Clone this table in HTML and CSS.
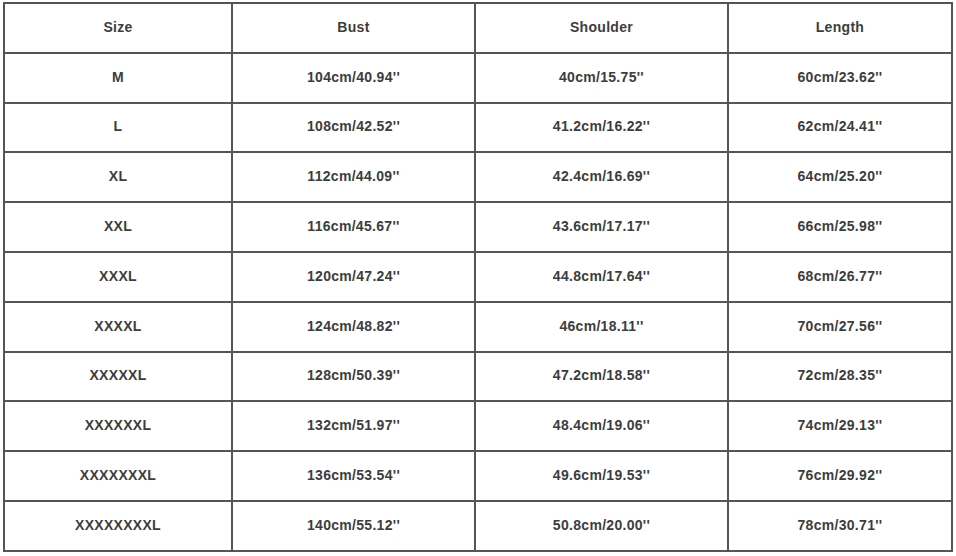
FILE: index.html
```html
<!DOCTYPE html>
<html>
<head>
<meta charset="utf-8">
<link rel="stylesheet" href="styles.css">
</head>
<body>
<div class="wrap">
<table class="chart">
<colgroup><col class="c1"><col class="c2"><col class="c3"><col class="c4"></colgroup>
<tr><td>Size</td><td>Bust</td><td>Shoulder</td><td>Length</td></tr>
<tr><td>M</td><td>104cm/40.94''</td><td>40cm/15.75''</td><td>60cm/23.62''</td></tr>
<tr><td>L</td><td>108cm/42.52''</td><td>41.2cm/16.22''</td><td>62cm/24.41''</td></tr>
<tr><td>XL</td><td>112cm/44.09''</td><td>42.4cm/16.69''</td><td>64cm/25.20''</td></tr>
<tr><td>XXL</td><td>116cm/45.67''</td><td>43.6cm/17.17''</td><td>66cm/25.98''</td></tr>
<tr><td>XXXL</td><td>120cm/47.24''</td><td>44.8cm/17.64''</td><td>68cm/26.77''</td></tr>
<tr><td>XXXXL</td><td>124cm/48.82''</td><td>46cm/18.11''</td><td>70cm/27.56''</td></tr>
<tr><td>XXXXXL</td><td>128cm/50.39''</td><td>47.2cm/18.58''</td><td>72cm/28.35''</td></tr>
<tr><td>XXXXXXL</td><td>132cm/51.97''</td><td>48.4cm/19.06''</td><td>74cm/29.13''</td></tr>
<tr><td>XXXXXXXL</td><td>136cm/53.54''</td><td>49.6cm/19.53''</td><td>76cm/29.92''</td></tr>
<tr><td>XXXXXXXXL</td><td>140cm/55.12''</td><td>50.8cm/20.00''</td><td>78cm/30.71''</td></tr>
</table>
</div>
</body>
</html>
```
FILE: styles.css
```css
html, body {
  margin: 0;
  padding: 0;
  background: #fff;
}
.wrap {
  padding: 2px 0 0 3px;
}
.chart {
  border-collapse: collapse;
  table-layout: fixed;
  width: 948px;
  font-family: "Liberation Sans", Arial, sans-serif;
  font-size: 14px;
  font-weight: bold;
  letter-spacing: 0.3px;
  color: #3d3d3d;
}
.c1 { width: 228px; }
.c2 { width: 243px; }
.c3 { width: 253px; }
.c4 { width: 224px; }
.chart td {
  border: 2px solid #555;
  height: 49.8px;
  padding: 0 0 2px 0;
  text-align: center;
  vertical-align: middle;
  box-sizing: border-box;
}
```
